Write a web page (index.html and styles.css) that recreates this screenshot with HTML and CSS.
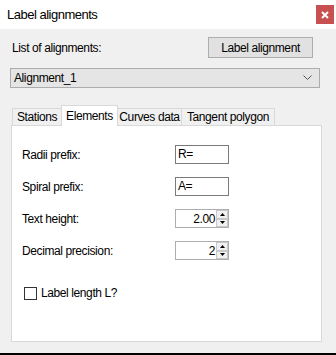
FILE: index.html
```html
<!DOCTYPE html>
<html lang="en">
  <head>
    <meta charset="UTF-8" />
    <title>Label alignments</title>
    <link rel="stylesheet" href="styles.css">
  </head>
  <body>
    <div class="window">
      <div class="titlebar">
        <span class="title">Label alignments</span>
        <div class="close-btn">
          <svg width="8" height="8" viewBox="0 0 8 8"><path d="M1 1 L7 7 M7 1 L1 7" stroke="#fff" stroke-width="2"/></svg>
        </div>
      </div>

      <div class="content">
        <div class="top-row">
          <span>List of alignments:</span>
          <button class="btn">Label alignment</button>
        </div>

        <div class="combo">
          <span>Alignment_1</span>
          <svg width="9" height="6" viewBox="0 0 9 6"><path d="M0.5 0.5 L4.5 4.5 L8.5 0.5" fill="none" stroke="#555" stroke-width="1"/></svg>
        </div>

        <div class="tabs">
          <div class="tab tab-stations">Stations</div>
          <div class="tab tab-elements active">Elements</div>
          <div class="tab tab-curves">Curves data</div>
          <div class="tab tab-tangent">Tangent polygon</div>
        </div>

        <div class="panel">
          <div class="form">
            <label>Radii prefix:</label>
            <div class="textbox">R=</div>

            <label>Spiral prefix:</label>
            <div class="textbox">A=</div>

            <label>Text height:</label>
            <div class="spinner">
              <span class="value">2.00</span>
              <div class="arrows">
                <div class="arrow"><svg width="5" height="3" viewBox="0 0 5 3"><path d="M0 3 L2.5 0 L5 3 Z" fill="#000"/></svg></div>
                <div class="arrow"><svg width="5" height="3" viewBox="0 0 5 3"><path d="M0 0 L2.5 3 L5 0 Z" fill="#000"/></svg></div>
              </div>
            </div>

            <label>Decimal precision:</label>
            <div class="spinner">
              <span class="value">2</span>
              <div class="arrows">
                <div class="arrow"><svg width="5" height="3" viewBox="0 0 5 3"><path d="M0 3 L2.5 0 L5 3 Z" fill="#000"/></svg></div>
                <div class="arrow"><svg width="5" height="3" viewBox="0 0 5 3"><path d="M0 0 L2.5 3 L5 0 Z" fill="#000"/></svg></div>
              </div>
            </div>
          </div>

          <div class="check-row">
            <div class="checkbox"></div>
            <span>Label length L?</span>
          </div>
        </div>
      </div>
    </div>
  </body>
</html>
```

FILE: styles.css
```css
body {
  margin: 0;
  font-family: "Liberation Sans", Arial, sans-serif;
  font-size: 12px;
  letter-spacing: -0.4px;
  color: #000;
}

.window {
  width: 336px;
  height: 355px;
  background-color: #f0f0f0;
  border-bottom: 2px solid #000;
  box-sizing: border-box;
  overflow: hidden;
}

.titlebar {
  height: 29px;
  background-color: #fff;
  display: flex;
  align-items: center;
  justify-content: space-between;
  padding-left: 7px;
  padding-right: 2px;
}

.title {
  font-size: 13px;
  letter-spacing: -0.5px;
}

.close-btn {
  width: 18px;
  height: 19px;
  background-color: #c75050;
  display: flex;
  align-items: center;
  justify-content: center;
}

.content {
  padding: 8px 0 0 10px;
}

.top-row {
  display: flex;
  align-items: center;
  justify-content: space-between;
  width: 303px;
  padding-left: 2px;
  box-sizing: border-box;
}

.btn {
  width: 105px;
  height: 21px;
  background-color: #e1e1e1;
  border: 1px solid #adadad;
  font-family: inherit;
  font-size: 12px;
  letter-spacing: -0.4px;
  padding: 0;
  color: #000;
}

.combo {
  margin-top: 10px;
  width: 310px;
  height: 20px;
  box-sizing: border-box;
  background-color: #e5e5e5;
  border: 1px solid #acacac;
  display: flex;
  align-items: center;
  justify-content: space-between;
  padding: 0 7px 0 3px;
}

.tabs {
  margin-top: 16px;
  margin-left: 2px;
  display: flex;
  align-items: flex-end;
  height: 21px;
  position: relative;
  z-index: 1;
}

.tab {
  height: 17px;
  box-sizing: border-box;
  border: 1px solid #d9d9d9;
  border-bottom: none;
  border-right: none;
  background-color: #f0f0f0;
  padding-top: 1px;
  text-align: center;
  white-space: nowrap;
}

.tab-stations {
  width: 49px;
}

.tab-elements {
  width: 57px;
}

.tab-curves {
  width: 63px;
}

.tab-tangent {
  width: 94px;
}

.tab:last-child {
  border-right: 1px solid #d9d9d9;
}

.tab.active {
  height: 21px;
  background-color: #fff;
  border-right: 1px solid #d9d9d9;
  margin-bottom: -1px;
  padding-top: 3px;
}

.tab.active + .tab {
  border-left: none;
}

.panel {
  margin-left: 1px;
  width: 311px;
  height: 217px;
  box-sizing: border-box;
  background-color: #fff;
  border: 1px solid #d9d9d9;
  padding: 19px 0 0 10px;
}

.form {
  display: grid;
  grid-template-columns: 153px 54px;
  row-gap: 13px;
  align-items: center;
}

.textbox {
  height: 19px;
  box-sizing: border-box;
  border: 1px solid #7a7a7a;
  padding: 1px 2px;
}

.spinner {
  height: 19px;
  box-sizing: border-box;
  border: 1px solid #abadb3;
  display: flex;
  align-items: center;
  justify-content: flex-end;
}

.value {
  padding-right: 1px;
}

.arrows {
  display: flex;
  flex-direction: column;
  height: 17px;
  width: 12px;
}

.arrow {
  flex: 1;
  border: 1px solid #c8c8c8;
  background-color: #f0f0f0;
  display: flex;
  align-items: center;
  justify-content: center;
}

.check-row {
  margin-top: 26px;
  margin-left: 2px;
  display: flex;
  align-items: center;
  gap: 4px;
}

.checkbox {
  width: 13px;
  height: 13px;
  box-sizing: border-box;
  border: 1px solid #333;
  background-color: #fff;
}
```
